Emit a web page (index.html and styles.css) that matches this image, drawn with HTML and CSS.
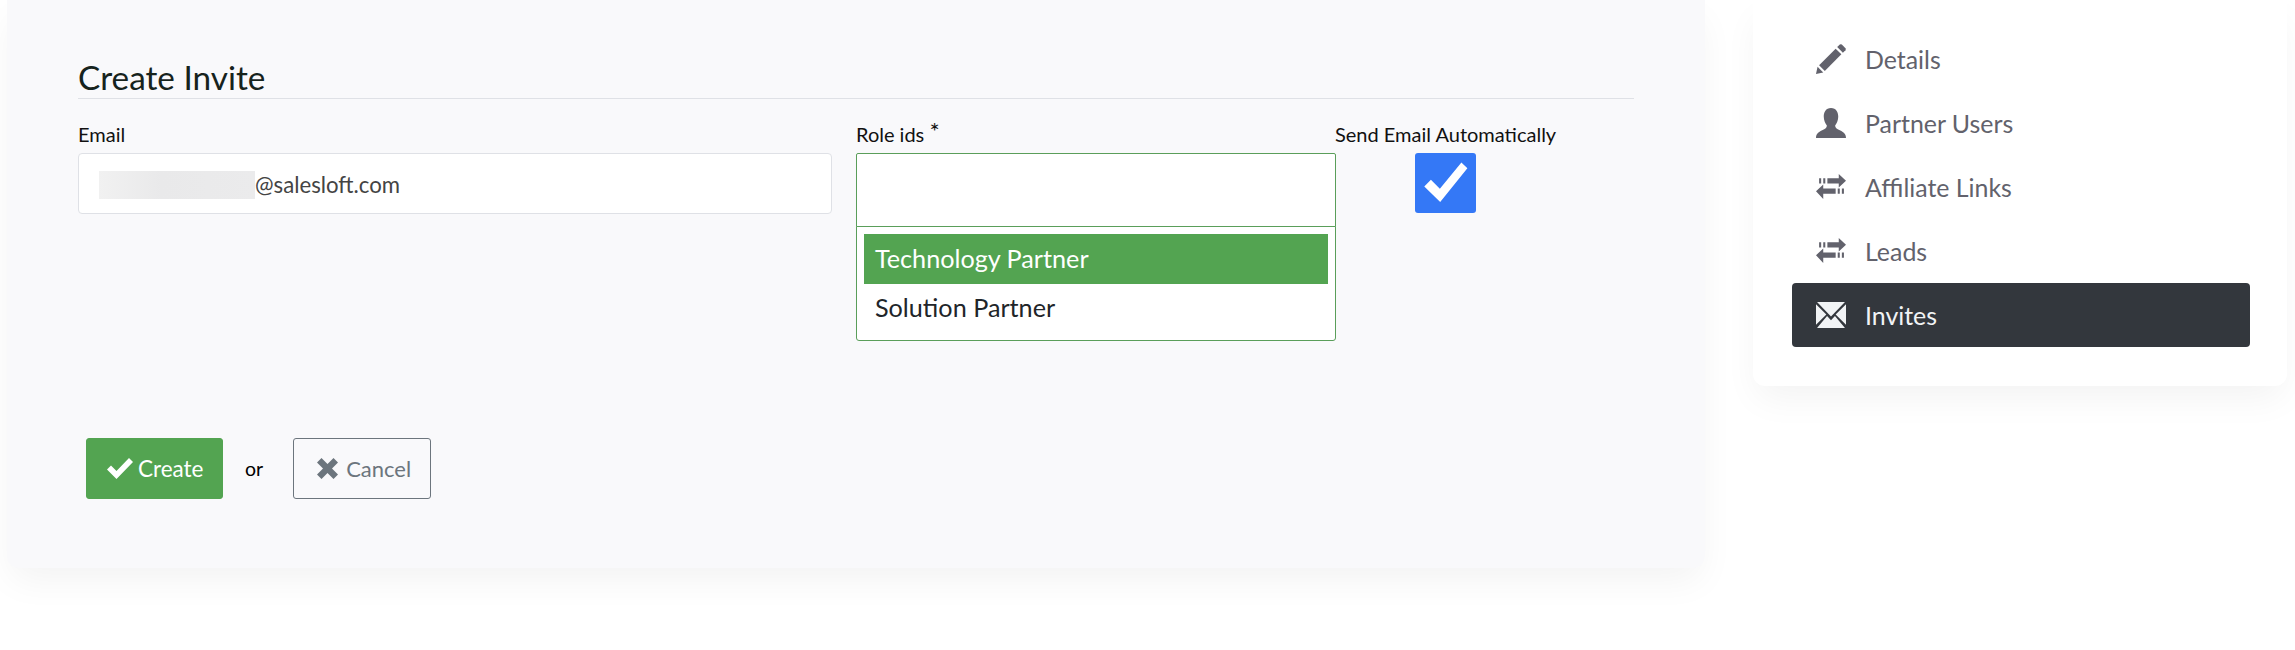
FILE: index.html
```html
<!DOCTYPE html>
<html lang="en">
<head>
<meta charset="utf-8">
<title>Create Invite</title>
<link rel="stylesheet" href="styles.css">
</head>
<body>
<div class="page">
  <main class="card">
    <h1 class="title">Create Invite</h1>
    <form class="fields">
      <div class="field email-field">
        <label class="label">Email</label>
        <div class="input"><span class="redact"></span><span>@salesloft.com</span></div>
      </div>
      <div class="field role-field">
        <label class="label">Role ids <span class="req">*</span></label>
        <div class="select-box"></div>
        <ul class="dropdown">
          <li class="option active">Technology Partner</li>
          <li class="option">Solution Partner</li>
        </ul>
      </div>
      <div class="field send-field">
        <label class="label">Send Email Automatically</label>
        <div class="checkbox">
          <svg width="61" height="60" viewBox="43 39 182 181"><path fill="#fff" d="M70 140L90 120L117 147L182 68L200 85L118 187Z"/></svg>
        </div>
      </div>
    </form>
    <div class="actions">
      <button class="btn btn-create" type="button">
        <svg class="btn-icon" width="26" height="21" viewBox="0 0 26 21"><path fill="#fff" d="M0 11.5L4 7.5L9.5 13L22 0L26 4L9.5 21Z"/></svg>
        <span>Create</span>
      </button>
      <span class="or">or</span>
      <button class="btn btn-cancel" type="button">
        <svg class="btn-icon" width="21" height="21" viewBox="0 0 21 21"><path fill="#6c757d" d="M4.5 0L10.5 6L16.5 0L21 4.500L15 10.500L21 16.500L16.500 21L10.500 15L4.500 21L0 16.500L6 10.500L0 4.500Z"/></svg>
        <span>Cancel</span>
      </button>
    </div>
  </main>
  <aside class="side">
    <nav class="nav">
      <a class="nav-item">
        <svg class="nav-icon" viewBox="0 0 29 29"><path d="M0 29L1.500 22L7 27.500Z"/><path d="M3 20.500L19 4.500L24.500 10L8.500 26Z"/><path d="M20.500 3L23 .5Q24 0 25 .5L28.500 4Q29 5 28.500 6L26 8.500Z"/></svg>
        <span>Details</span>
      </a>
      <a class="nav-item">
        <svg class="nav-icon" viewBox="0 0 29 29"><path d="M14.500 0C9.500 0 7.500 4 7.500 8.500C7.500 12 9 15 10.500 17C10.500 19.500 9 20 6 21.500C3 23 0 24.500 0 29H29C29 24.500 26 23 23 21.500C20 20 18.500 19.500 18.500 17C20 15 21.500 12 21.500 8.500C21.500 4 19.500 0 14.500 0Z"/></svg>
        <span>Partner Users</span>
      </a>
      <a class="nav-item">
        <svg class="nav-icon" viewBox="0 0 29 29"><path d="M3 6H5V11H3ZM7 6H9V11H7ZM11 6H22V2L29 8.500L22 15V11H11ZM25 16H27V21H25ZM21 16H23V21H21ZM7 16H19V21H7V26L0 18.500L7 12Z"/></svg>
        <span>Affiliate Links</span>
      </a>
      <a class="nav-item">
        <svg class="nav-icon" viewBox="0 0 29 29"><path d="M3 6H5V11H3ZM7 6H9V11H7ZM11 6H22V2L29 8.500L22 15V11H11ZM25 16H27V21H25ZM21 16H23V21H21ZM7 16H19V21H7V26L0 18.500L7 12Z"/></svg>
        <span>Leads</span>
      </a>
      <a class="nav-item active">
        <svg class="nav-icon" viewBox="0 0 29 29"><path d="M1 2H28L14.500 16ZM0 4V24L10 14ZM29 4V24L19 14ZM1 27L10.700 15.500L14.500 19.500L18.300 15.500L28 27Z"/></svg>
        <span>Invites</span>
      </a>
    </nav>
  </aside>
</div>
</body>
</html>
```

FILE: styles.css
```css
* { box-sizing: border-box; }
html, body { margin: 0; padding: 0; background: #fff; }
body {
  height: 650px;
  overflow: hidden;
  font-family: "Lato", "Liberation Sans", sans-serif;
  color: #000;
}
.page { display: flex; align-items: flex-start; padding-left: 7px; }
.card {
  width: 1698px;
  height: 568px;
  padding: 59px 71px 0;
  background: #f9f9fb;
  border-radius: 0 0 12px 12px;
  box-shadow: 0 16px 36px -4px rgba(0, 0, 0, .05);
}
.title {
  margin: 0;
  height: 40px;
  font-size: 33.300px;
  line-height: 37px;
  font-weight: 400;
  color: #16231d;
  border-bottom: 1px solid #dfe1e6;
}
.fields { display: flex; margin-top: 21px; height: 221px; }
.field { display: flex; flex-direction: column; }
.email-field { width: 754px; margin-right: 24px; }
.role-field { width: 480px; }
.send-field { align-items: center; margin-left: -1px; }
.label {
  height: 33px;
  font-size: 20px;
  line-height: 28px;
  white-space: nowrap;
  color: #111;
}
.req { font-size: 24px; line-height: 20px; vertical-align: 2px; }
.input {
  display: flex;
  align-items: center;
  height: 61px;
  padding: 2px 0 0 20px;
  background: #fff;
  border: 1px solid #dfe1e6;
  border-radius: 4px;
  font-size: 22.200px;
  color: #444;
}
.redact {
  width: 156px;
  height: 28px;
  background: linear-gradient(90deg, #f1f1f1, #e9e9ea 40%, #ebebec);
}
.select-box {
  height: 75px;
  background: #fff;
  border: 1px solid #5a9e5a;
  border-radius: 2px 2px 0 0;
}
.dropdown {
  margin: -1px 0 0;
  padding: 7px 7px 6px;
  list-style: none;
  background: #fff;
  border: 1px solid #5a9e5a;
  border-radius: 0 0 3px 3px;
}
.option {
  height: 50px;
  padding-left: 11px;
  font-size: 25.200px;
  line-height: 47px;
  color: #212529;
}
.option.active { background: #53a451; color: #fff; line-height: 49px; }
.checkbox {
  display: flex;
  width: 61px;
  height: 60px;
  background: #3478f6;
  border-radius: 3px;
}
.actions { display: flex; align-items: center; margin: 97px 0 0 8px; }
.btn {
  display: flex;
  align-items: center;
  width: 138px;
  height: 61px;
  padding: 0;
  font-family: inherit;
  font-size: 22.500px;
  border-radius: 3px;
}
.btn-create {
  width: 137px;
  padding-left: 20px;
  color: #fff;
  background: #53a451;
  border: 1px solid #53a451;
}
.btn-create .btn-icon { margin-right: 5px; }
.btn-cancel {
  padding-left: 23px;
  font-size: 22px;
  color: #6c757d;
  background: transparent;
  border: 1px solid #6c757d;
}
.btn-cancel .btn-icon { margin-right: 8px; }
.or { margin: 0 30px 0 22px; font-size: 19.500px; }
.side { margin-left: 48px; }
.nav {
  width: 534px;
  height: 386px;
  padding: 27px 37px 0 39px;
  background: #fff;
  border-radius: 0 0 12px 12px;
  box-shadow: 0 16px 36px -4px rgba(0, 0, 0, .05);
}
.nav-item {
  display: flex;
  align-items: center;
  height: 64px;
  padding: 0 0 1px 24px;
  font-size: 24.900px;
  color: #62626c;
  border-radius: 4px;
}
.nav-icon { width: 30px; height: 30px; margin-right: 19px; fill: #62626c; flex: none; }
.nav-item.active { background: #33373d; color: #f1f3f5; }
.nav-item.active .nav-icon { fill: #f1f3f5; }
```
